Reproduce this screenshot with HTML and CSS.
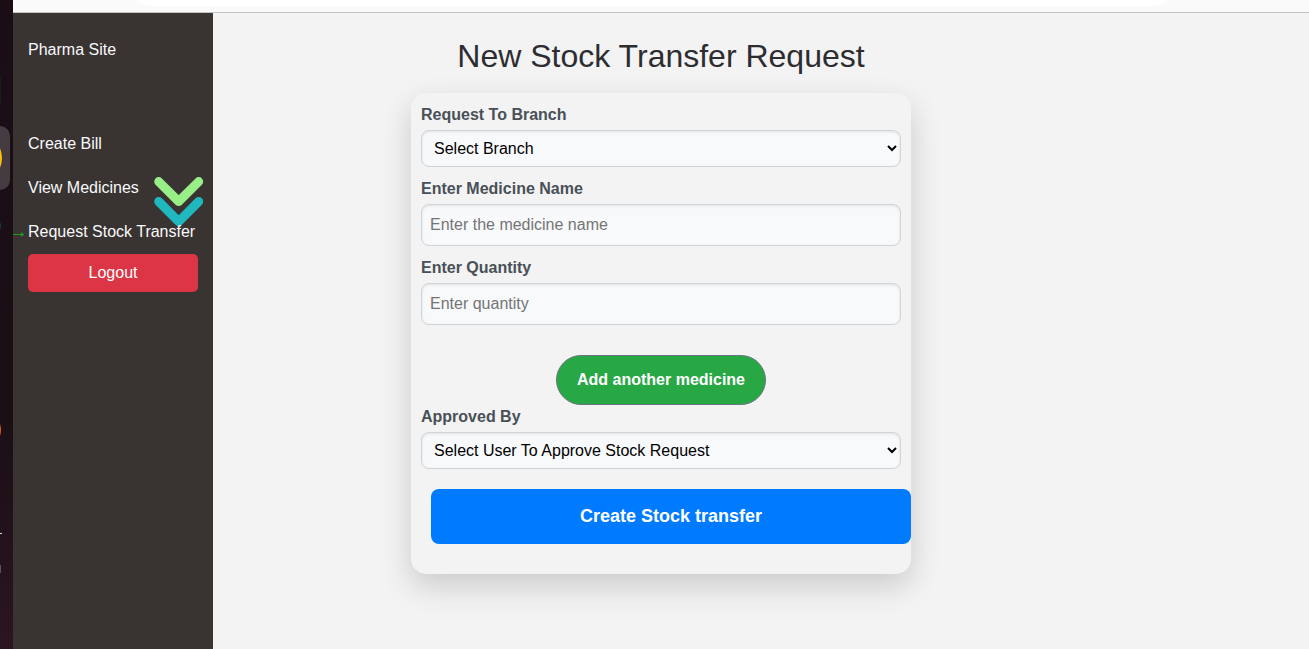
FILE: index.html
```html
<!DOCTYPE html>
<html lang="en">
<head>
<meta charset="utf-8">
<title>New Stock Transfer Request</title>
<link rel="stylesheet" href="styles.css">
</head>
<body>
<div class="desktop">
  <div class="dock">
    <svg width="13" height="649" viewBox="0 0 13 649" aria-hidden="true">
      <rect x="-20" y="76" width="20.8" height="28" fill="#1c1d1c"/>
      <rect x="-50" y="126" width="60" height="64" rx="10" fill="#453c42"/>
      <circle cx="-22" cy="158" r="24" fill="#ffc107"/>
      <ellipse cx="-5" cy="226" rx="6" ry="7" fill="#123a55"/>
      <ellipse cx="-5" cy="430" rx="6" ry="11" fill="#e95420"/>
      <rect x="0" y="533" width="2" height="1" fill="#ddd"/>
      <rect x="0" y="565" width="1" height="8" fill="#55555a"/>
    </svg>
  </div>
  <div class="window">
    <div class="toolbar"><div class="address"></div></div>
    <div class="page">
      <nav class="sidebar">
        <svg class="chevrons" width="50" height="50" viewBox="0 0 50 50" fill="none" stroke-width="9" stroke-linecap="round" stroke-linejoin="round" aria-hidden="true">
          <path d="M4.7 24.5L24.7 44.7L44.7 24.5" stroke="#20b8bf"/>
          <path d="M4.7 4.6L24.7 24.5L44.7 4.6" stroke="#98ee87"/>
        </svg>
        <a class="brand">Pharma Site</a>
        <a class="link">Create Bill</a>
        <a class="link">View Medicines</a>
        <a class="link active">Request Stock Transfer
          <svg class="arrow" width="12" height="7" viewBox="0 0 12 7" aria-hidden="true"><path d="M0 3.5H11" stroke="#1f9a1f"/><path d="M8 1L11.2 3.5L8 6Z" fill="#1f9a1f"/></svg>
        </a>
        <button class="logout">Logout</button>
      </nav>
      <main class="main">
        <h1 class="title">New Stock Transfer Request</h1>
        <form class="card">
          <div class="field">
            <label class="label" for="branch">Request To Branch</label>
            <select class="control select" id="branch"><option>Select Branch</option></select>
          </div>
          <div class="field">
            <label class="label" for="name">Enter Medicine Name</label>
            <input class="control input" id="name" placeholder="Enter the medicine name">
          </div>
          <div class="field">
            <label class="label" for="qty">Enter Quantity</label>
            <input class="control input" id="qty" placeholder="Enter quantity">
          </div>
          <button class="add" type="button">Add another medicine</button>
          <div class="field">
            <label class="label" for="user">Approved By</label>
            <select class="control select" id="user"><option>Select User To Approve Stock Request</option></select>
          </div>
          <button class="submit" type="button">Create Stock transfer</button>
        </form>
      </main>
    </div>
  </div>
</div>
</body>
</html>
```
FILE: styles.css
```css
* { box-sizing: border-box; }
body {
  margin: 0;
  height: 649px;
  overflow: hidden;
  font: 16px/24px "Liberation Sans", Arial, sans-serif;
}
button, input, select { font: inherit; }
.desktop { display: flex; height: 649px; }
.dock {
  width: 13px;
  flex: none;
  background: linear-gradient(#1b0d15 0%, #1b0f16 65%, #2b1520 100%);
}
.dock svg { display: block; }
.window { flex: 1; display: flex; flex-direction: column; }
.toolbar {
  height: 13px;
  flex: none;
  padding: 0 142px 0 124px;
  background: #fafafa;
  border-bottom: 1px solid #c4c4c4;
}
.address { height: 6px; background: #fff; border-radius: 0 0 18px 18px / 0 0 6px 6px; }
.page { flex: 1; display: flex; background: #f3f3f3; }
.sidebar {
  position: relative;
  width: 200px;
  flex: none;
  display: flex;
  flex-direction: column;
  padding: 25px 15px;
  background: #393332;
  color: #f8f9fa;
  white-space: nowrap;
}
.brand { margin-bottom: 60px; }
.link { padding: 10px 0; }
.active { position: relative; }
.arrow { position: absolute; left: -15px; top: 21px; }
.chevrons { position: absolute; left: 141px; top: 164px; }
.logout {
  height: 38px;
  padding: 0 0 1px;
  border: 0;
  border-radius: 5px;
  background: #dc3545;
  color: #fff;
}
.main { width: 500px; margin-left: 198px; }
.title {
  margin: 24px 0 18px;
  font-size: 32px;
  line-height: 38px;
  font-weight: 400;
  text-align: center;
  color: #2d2d31;
}
.card {
  display: flex;
  flex-direction: column;
  height: 481px;
  padding: 10px;
  border-radius: 15px;
  background: #f3f3f3;
  box-shadow: 0 12px 30px rgba(0, 0, 0, .17);
}
.field { display: flex; flex-direction: column; gap: 3px; }
.field + .field { margin-top: 10px; }
.label { font-weight: 700; line-height: 24px; color: #495057; }
.control {
  width: 100%;
  padding: 8px;
  border: 1px solid #ced4da;
  border-radius: 8px;
  background: #f8f9fb;
  box-shadow: inset 0 1px 3px rgba(0, 0, 0, .1);
}
.select { height: 37px; color: #000; }
.input { height: 42px; }
.input::placeholder { color: #757575; }
.add {
  align-self: center;
  width: 210px;
  height: 50px;
  margin-top: 30px;
  padding: 0;
  border: 1px solid #6c757d;
  border-radius: 25px;
  background: #28a745;
  color: #fff;
  font-weight: 700;
}
.submit {
  width: 480px;
  height: 55px;
  flex: none;
  margin: 20px 0 0 10px;
  padding: 0 0 1px;
  border: 0;
  border-radius: 8px;
  background: #007bff;
  color: #fff;
  font-size: 18px;
  font-weight: 700;
}
```
